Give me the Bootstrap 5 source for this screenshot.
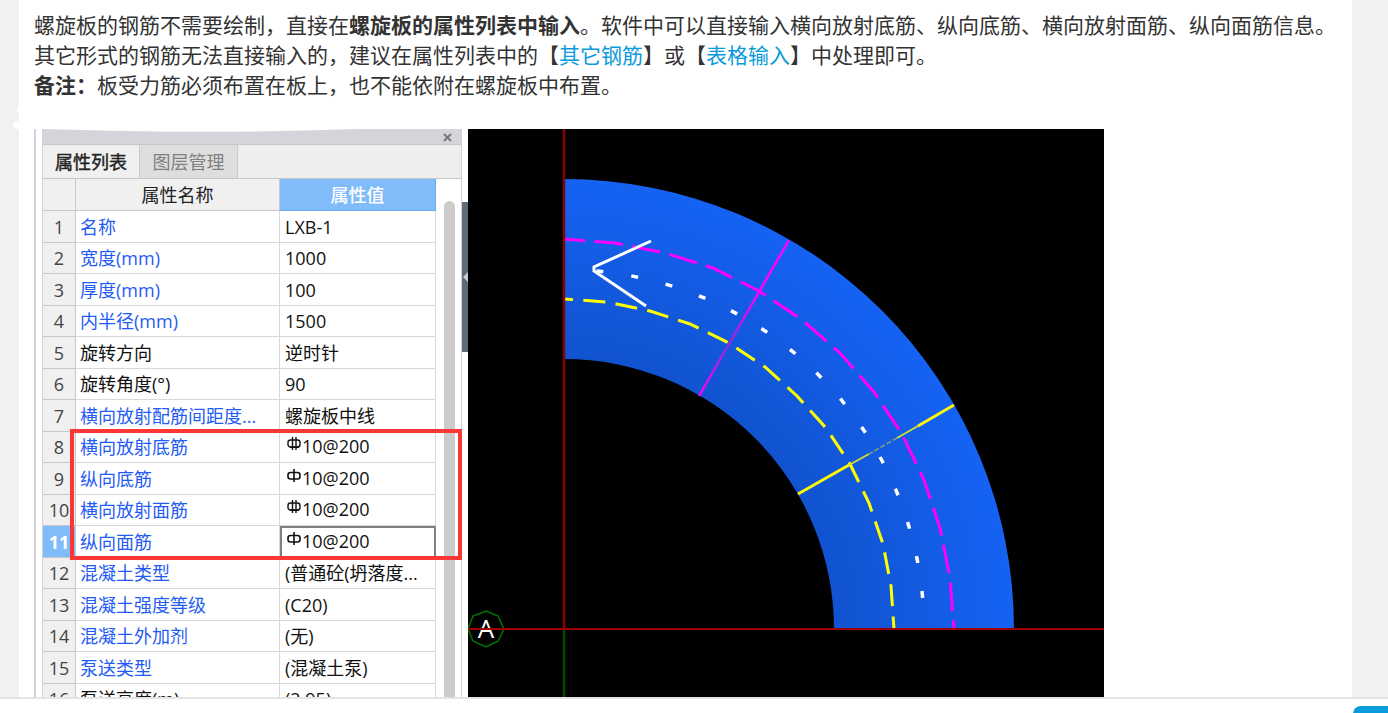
<!DOCTYPE html>
<html lang="zh-CN">
<head>
<meta charset="utf-8">
<meta name="viewport" content="width=device-width, initial-scale=1">
<title>螺旋板</title>
<link rel="stylesheet" href="https://cdn.jsdelivr.net/npm/bootstrap@5.3.0/dist/css/bootstrap.min.css">
<style>
body{font-family:"Open Sans","Noto Sans CJK SC",sans-serif;background:#fff;color:#333}
.page-bg{background:#f1f1f1;padding:0 36px 0 19px}
.article{padding:9px 0 0 15px}
.article-text{font-family:"Noto Sans CJK SC",sans-serif;font-size:21px;line-height:30px;margin-bottom:30px}
.article-text a{color:#0a9bdc}
.props{width:428px;border-left:2px solid #d4d4d8;padding-left:6px}
.props-frame{border:solid #cfd2d6;border-width:0 1px;color:#222}
.props-title{height:16px;background:#d4d4da;border-bottom:1px solid #c4c8cc;padding-right:7px}
.close-btn{width:12px;height:12px;line-height:0}
.tab-strip{height:34px;background:#eee;border-bottom:1px solid #c4c8cc}
.tab-btn{font-size:18px;line-height:24px;border:0;border-right:1px solid #c9cbcf;background:#f0f0f0;color:#222;width:97px;padding:0}
.tab-btn.chosen{-webkit-text-stroke:.4px}
.tab-btn.idle{background:#dedede;color:#808080;width:98px}
.grid{width:393px;table-layout:fixed;border-collapse:separate;border-spacing:0;font-size:18px;line-height:24px}
.grid th,.grid td{height:31px;padding:0 0 0 5px;border:solid #d8d8d8;border-width:0 1px 1px 0;white-space:nowrap;overflow:hidden;text-overflow:ellipsis;font-weight:400}
.grid td.key,.grid td.plain{padding-left:4px}
.grid tbody tr:nth-child(odd)>*{height:32px}
.grid thead th{height:32px;background:#f0f0f0;text-align:center;padding:0;border-color:#c8c8c8}
.grid thead th.sel{background:#80bbfa;border-color:#6aa9ee;color:#fff;font-weight:500}
.grid tbody th{background:#f0f0f0;padding:0;text-align:center;color:#444;border-color:#c8c8c8;text-overflow:clip}
.grid tbody tr.sel th{background:#80bbfa;color:#fff;font-weight:700}
.grid td{color:#111}
.grid td.key{color:#1f5cf5}
.grid tr.sel td.val{border:2px solid #808080;padding-left:3px}
.bar-sym{width:14px;height:15px;display:block;margin:3px 1px 0 2px}
.val-wrap{height:26px}
.scroller{padding:22px 6px 0 8px}
.thumb{background:#ccc;border-radius:6px 6px 0 0}
.callout{left:34px;top:300px;width:392px;height:131px;border:4px solid #fa3737}
.splitter{width:6px;margin-top:73px;height:150px;background:#5f6b76}
.viewport{width:636px;height:569px;background:#000}
.brush{left:12px;top:95px;width:420px;height:40px}
.bottom-bar{height:16px;border-top:2px solid #e4e4e4;padding-top:7px}
.corner-btn{width:35px;height:40px;background:#0a9bdc;border:0;border-radius:8px 0 0 0}
</style>
</head>
<body>
<div class="vh-100 d-flex flex-column overflow-hidden">
<main class="page-bg flex-grow-1 overflow-hidden position-relative">
<article class="article bg-white">
<p class="article-text">螺旋板的钢筋不需要绘制，直接在<b>螺旋板的属性列表中输入</b>。软件中可以直接输入横向放射底筋、纵向底筋、横向放射面筋、纵向面筋信息。<br>其它形式的钢筋无法直接输入的，建议在属性列表中的【<a href="#" class="text-decoration-none">其它钢筋</a>】或【<a href="#" class="text-decoration-none">表格输入</a>】中处理即可。<br><b>备注：</b>板受力筋必须布置在板上，也不能依附在螺旋板中布置。</p>
<div class="d-flex align-items-start">
<section class="props position-relative flex-shrink-0">
<div class="props-frame">
<div class="props-title d-flex justify-content-end align-items-center"><button class="close-btn btn p-0 border-0"><svg width="10" height="10" viewBox="0 0 10 10"><path d="M1 2l7 7M8 2l-7 7" stroke="#777" stroke-width="2"/></svg></button></div>
<div class="tab-strip d-flex"><button class="tab-btn chosen">属性列表</button><button class="tab-btn idle">图层管理</button></div>
<div class="d-flex">
<table class="grid flex-shrink-0">
<colgroup><col style="width:33px"><col style="width:204px"><col style="width:156px"></colgroup>
<thead><tr><th></th><th>属性名称</th><th class="sel">属性值</th></tr></thead>
<tbody>
<tr><th>1</th><td class="key">名称</td><td>LXB-1</td></tr>
<tr><th>2</th><td class="key">宽度(mm)</td><td>1000</td></tr>
<tr><th>3</th><td class="key">厚度(mm)</td><td>100</td></tr>
<tr><th>4</th><td class="key">内半径(mm)</td><td>1500</td></tr>
<tr><th>5</th><td class="plain">旋转方向</td><td>逆时针</td></tr>
<tr><th>6</th><td class="plain">旋转角度(°)</td><td>90</td></tr>
<tr><th>7</th><td class="key">横向放射配筋间距度...</td><td>螺旋板中线</td></tr>
<tr><th>8</th><td class="key">横向放射底筋</td><td class="val"><div class="val-wrap d-flex"><svg class="bar-sym" viewBox="0 0 14 15"><use href="#bar3"/></svg>10@200</div></td></tr>
<tr><th>9</th><td class="key">纵向底筋</td><td class="val"><div class="val-wrap d-flex"><svg class="bar-sym" viewBox="0 0 14 15"><use href="#bar1"/></svg>10@200</div></td></tr>
<tr><th>10</th><td class="key">横向放射面筋</td><td class="val"><div class="val-wrap d-flex"><svg class="bar-sym" viewBox="0 0 14 15"><use href="#bar3"/></svg>10@200</div></td></tr>
<tr class="sel"><th>11</th><td class="key">纵向面筋</td><td class="val"><div class="val-wrap d-flex"><svg class="bar-sym" viewBox="0 0 14 15"><use href="#bar1"/></svg>10@200</div></td></tr>
<tr><th>12</th><td class="key">混凝土类型</td><td>(普通砼(坍落度...</td></tr>
<tr><th>13</th><td class="key">混凝土强度等级</td><td>(C20)</td></tr>
<tr><th>14</th><td class="key">混凝土外加剂</td><td>(无)</td></tr>
<tr><th>15</th><td class="key">泵送类型</td><td>(混凝土泵)</td></tr>
<tr><th>16</th><td class="plain">泵送高度(m)</td><td>(2.95)</td></tr>
</tbody>
</table>
<div class="scroller flex-grow-1 d-flex"><div class="thumb flex-grow-1"></div></div>
</div>
</div>
<div class="callout position-absolute"></div>
</section>
<div class="splitter flex-shrink-0 d-flex align-items-center"><svg width="6" height="12" viewBox="0 0 6 12"><path d="M6 1L1 6l5 5z" fill="#c8ccd0"/></svg></div>
<svg class="viewport flex-shrink-0" viewBox="0 0 636 569" fill="none">
<defs>
<radialGradient id="slab" gradientUnits="userSpaceOnUse" cx="96" cy="500" r="450"><stop offset=".6" stop-color="#1153cf"/><stop offset="1" stop-color="#1562f3"/></radialGradient>
<linearGradient id="fadeM" gradientUnits="userSpaceOnUse" x1="321" y1="111" x2="231" y2="267"><stop offset=".35" stop-color="#f0f"/><stop offset=".68" stop-color="#8a2ce0"/><stop offset="1" stop-color="#f0f"/></linearGradient>
<g id="bar1" fill="none" stroke="#111" stroke-width="1.6"><rect x="1" y="3.500" width="12" height="6.500" rx="2.500"/><path d="M7 0v13"/></g>
<g id="bar3" fill="none" stroke="#111" stroke-width="1.4"><rect x="1" y="3" width="12" height="7" rx="2.500"/><path d="M5.500 0v13M9 0v13M3 10.300h9"/></g>
</defs>
<path d="M96 50A450 450 0 0 1 546 500H366A270 270 0 0 0 96 230z" fill="url(#slab)"/>
<path d="M96 110L147 114L197 124L245 139L291 162L333 190L372 224L406 263L434 305L456 351L472 399L482 449L486 500" stroke="#f0f" stroke-width="3" stroke-dasharray="28.800 9.400" stroke-dashoffset="7.800"/>
<path d="M96 170L139 173L182 182L222 195L261 214L297 238L329 267L358 299L382 335L401 374L415 415L423 457L426 500" stroke="#ff0" stroke-width="3" stroke-dasharray="22 10.400" stroke-dashoffset="13"/>
<path d="M128.400 142A360 360 0 0 1 455.800 487.400" stroke="#fff" stroke-width="3.500" stroke-dasharray="7 28.300"/>
<path d="M321 111L231 267" stroke="url(#fadeM)" stroke-width="2.500"/>
<path d="M486 276L450 297M381 336L330 365" stroke="#ff0" stroke-width="2.800"/>
<path d="M450 297l-21 12M381 336l20-11" stroke="#d8e22a" stroke-width="1.600"/>
<path d="M429 309l-28 16" stroke="#8da77d" stroke-width="1.400" stroke-dasharray="5 2"/>
<path d="M183 112L126 138v4L178 177" stroke="#fff" stroke-width="3"/>
<path d="M96 0V500" stroke="#8b0000" stroke-width="2.500"/>
<path d="M96 500v69" stroke="#004a00" stroke-width="2.500"/>
<path d="M18 482l12 5 6 13-6 12-12 6-13-6-5-12 5-13z" stroke="#007500" stroke-width="1.500"/>
<text x="18" y="509" fill="#fff" text-anchor="middle" font-family="Open Sans, sans-serif" font-size="26">A</text>
<path d="M0 500H636" stroke="#a00000" stroke-width="2"/>
</svg>
</div>
</article>
<svg class="brush position-absolute" viewBox="0 0 420 40" fill="#fff"><rect x="5" y="11" width="20" height="7" rx="3.500"/><rect x="1" y="26" width="24" height="8" rx="4"/><path d="M30 32H376L346 34Q200 39 70 35L30 34z"/></svg>
</main>
<footer class="bottom-bar bg-white d-flex justify-content-end overflow-hidden flex-shrink-0"><button class="corner-btn flex-shrink-0"></button></footer>
</div>
<script src="https://cdn.jsdelivr.net/npm/bootstrap@5.3.0/dist/js/bootstrap.bundle.min.js"></script>
</body>
</html>
